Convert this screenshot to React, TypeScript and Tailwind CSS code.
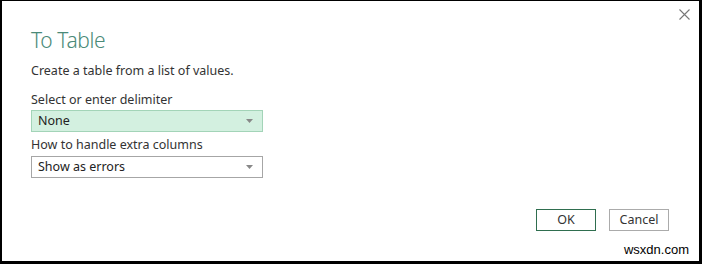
import React from 'react';

const font = { fontFamily: '"Segoe UI", "Noto Sans", "Open Sans", sans-serif' };

const Dropdown: React.FC<{ value: string; active?: boolean }> = ({ value, active }) => (
  <div
    className={`w-[232px] h-[22px] flex items-center justify-between pl-[6px] pr-[9px] border text-[12.5px] text-[#222] ${
      active ? 'bg-[#d3f0e0] border-[#a3d4b8]' : 'bg-white border-[#a6a6a6]'
    }`}
  >
    <span>{value}</span>
    <svg width="7" height="4" viewBox="0 0 7 4">
      <path d="M0 0h7L3.5 4z" fill="#888" />
    </svg>
  </div>
);

export default function App() {
  return (
    <div className="w-[702px] h-[264px] bg-black pl-[2px] pt-[1px] pr-[3px] pb-[3px]" style={font}>
      <div className="relative w-full h-full bg-white flex flex-col pl-[29px] pr-[30px]">
        <button className="absolute right-[5px] top-[3px] w-[20px] h-[20px] flex items-center justify-center">
          <svg width="11" height="11" viewBox="0 0 11 11">
            <path d="M0.5 0.5l10 10M10.5 0.5l-10 10" stroke="#777" strokeWidth="1.1" />
          </svg>
        </button>
        <h1 className="mt-[26px] text-[21px] font-light leading-[26px] tracking-[-0.4px] text-[#4a8a78]">To Table</h1>
        <p className="mt-[10px] text-[12.5px] leading-[16px] text-[#333]">Create a table from a list of values.</p>
        <label className="mt-[13px] text-[12.5px] leading-[16px] text-[#333]">Select or enter delimiter</label>
        <div className="mt-[2px]">
          <Dropdown value="None" active />
        </div>
        <label className="mt-[5px] text-[12.5px] leading-[16px] text-[#333]">How to handle extra columns</label>
        <div className="mt-[3px]">
          <Dropdown value="Show as errors" />
        </div>
        <div className="mt-[31px] flex justify-end gap-[13px]">
          <button className="w-[60px] h-[22px] border border-[#2f6e4f] bg-white text-[12.5px] text-[#333]">OK</button>
          <button className="w-[60px] h-[22px] border border-[#ababab] bg-white text-[12.5px] text-[#333]">Cancel</button>
        </div>
        <div
          className="absolute right-[10px] bottom-[2px] text-[13px] text-black"
          style={{ fontFamily: '"Liberation Sans", Arial, sans-serif' }}
        >
          wsxdn.com
        </div>
      </div>
    </div>
  );
}
